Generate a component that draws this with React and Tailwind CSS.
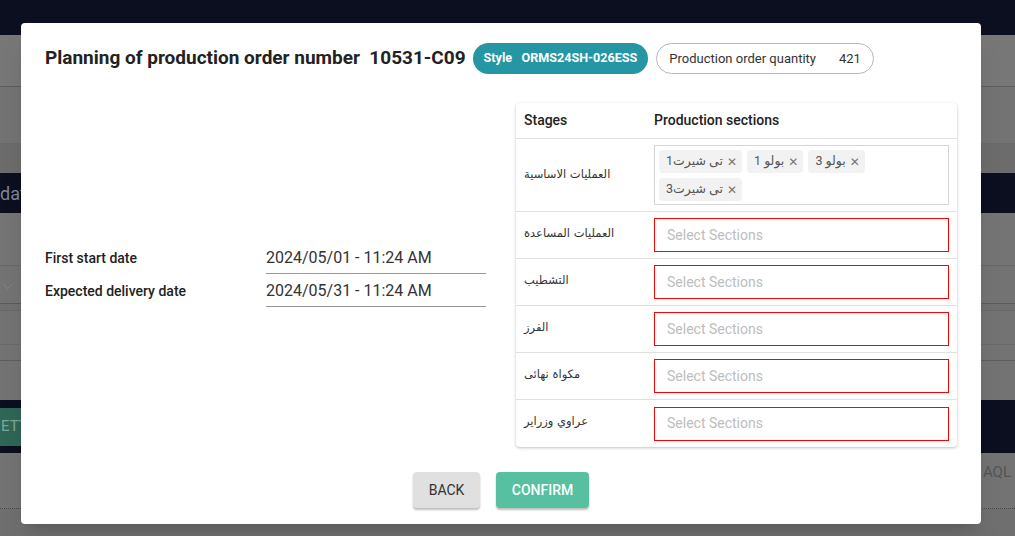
import React from "react";

const stages = [
  { name: "العمليات الاساسية", chips: ["تی شیرت1", "بولو 1", "بولو 3", "تی شیرت3"] },
  { name: "العمليات المساعدة" },
  { name: "التشطيب" },
  { name: "الفرز" },
  { name: "مكواة نهائى" },
  { name: "عراوي وزراير" },
];

const Chip = ({ label }) => (
  <div className="flex h-[23px] items-center gap-[4px] rounded-sm bg-[#f2f2f2] pl-[7px] pr-[5px] text-[12.5px] text-[#555]">
    <span>{label}</span>
    <span className="text-[12px] leading-none text-[#777]">✕</span>
  </div>
);

const Background = () => (
  <div className="flex h-[536px] w-full flex-col bg-[#757575]">
    <div className="h-[35px] bg-[#0b0f1f]" />
    <div className="h-[52px] border-b border-[#5e5e5e] bg-[#777777]" />
    <div className="h-[56px] bg-[#737373]" />
    <div className="h-[30px] bg-[#6c6c6c]" />
    <div className="flex h-[40px] items-center bg-[#0b0f1f] text-[18px] text-[#7d8596]">dat</div>
    <div className="h-[53px] border-b border-[#686868] bg-[#747474]" />
    <div className="flex h-[38px] items-center border-b border-[#5a5a5a] bg-[#737373] pl-[3px] text-[12px] text-[#8a8a8a]">⌵</div>
    <div className="h-[7px] border-b border-[#686868] bg-[#707070]" />
    <div className="h-[34px] border-b border-[#6a6a6a] bg-[#737373]" />
    <div className="h-[16px] border-b border-[#5e5e5e] bg-[#737373]" />
    <div className="h-[39px] bg-[#737373]" />
    <div className="flex h-[53px] items-center bg-[#0b0f1f]">
      <div className="flex h-[38px] w-[40px] items-center bg-[#2f6656] pl-[1px] text-[15px] text-[#7aa89a]">ETT</div>
    </div>
    <div className="flex h-[56px] items-start justify-end border-b border-dotted border-[#4a4a4a] bg-[#737373] pr-[4px] pt-[8px] text-[15px] text-[#555]">
      s AQL
    </div>
    <div className="flex-1 bg-[#6f6f6f]" />
  </div>
);

export default function App() {
  return (
    <div className="relative h-[536px] w-[1015px] overflow-hidden" style={{ fontFamily: "Roboto, 'DejaVu Sans', sans-serif" }}>
      <Background />
      <div className="absolute left-[21px] top-[23px] flex h-[501px] w-[960px] flex-col rounded-[4px] bg-white px-[24px] pt-[20px] shadow-xl">
        {/* title */}
        <div className="flex h-[31px] items-center">
          <h1 className="text-[19px] font-bold text-[#222]">
            Planning of production order number&nbsp; 10531-C09
          </h1>
          <div className="ml-[7px] flex h-[31px] items-center rounded-full bg-[#2596a3] px-[11px] text-[12.6px] font-bold text-white">
            Style&nbsp;&nbsp; ORMS24SH-026ESS
          </div>
          <div className="ml-[8px] flex h-[31px] items-center rounded-full border border-[#b8b8b8] px-[12px] text-[13px] text-[#333]">
            Production order quantity
            <span className="ml-[23px]">421</span>
          </div>
        </div>

        {/* body */}
        <div className="mt-[29px] flex">
          <div className="flex w-[441px] flex-col justify-center pt-[3px]">
            <div className="flex">
              <div className="w-[221px] pb-[3px] text-[14px] font-medium leading-[24px] text-[#222]">First start date</div>
              <div className="w-[220px] border-b border-[#999] pb-[3px] text-[16px] leading-[24px] text-[#333]">2024/05/01 - 11:24 AM</div>
            </div>
            <div className="flex">
              <div className="w-[221px] pb-[3px] pt-[5px] text-[14px] font-medium leading-[24px] text-[#222]">Expected delivery date</div>
              <div className="w-[220px] border-b border-[#999] pb-[3px] pt-[5px] text-[16px] leading-[24px] text-[#333]">2024/05/31 - 11:24 AM</div>
            </div>
          </div>

          <div className="ml-[30px] w-[441px] rounded-[4px] bg-white shadow-[0_1px_3px_rgba(0,0,0,0.25)]">
            <div className="flex h-[36px] items-center border-b border-[#e0e0e0] text-[14px] font-medium text-[#222]">
              <div className="w-[130px] pl-[8px]">Stages</div>
              <div className="pl-[8px]">Production sections</div>
            </div>
            {stages.map((s, i) => (
              <div
                key={i}
                className={`flex items-center ${i < stages.length - 1 ? "border-b border-[#e0e0e0]" : ""} ${s.chips ? "h-[73px]" : "h-[47px]"}`}
              >
                <div
                  className={`w-[130px] pl-[8px] text-[11.5px] text-[#333] ${s.chips ? "" : "-mt-[3px]"}`}
                  style={{ fontFamily: "'DejaVu Sans', sans-serif" }}
                >
                  {s.name}
                </div>
                <div className="flex-1 pl-[8px] pr-[8px]">
                  {s.chips ? (
                    <div className="flex h-[60px] flex-wrap content-start gap-x-[5px] gap-y-[5px] border border-[#d6d6d6] p-[4px]">
                      {s.chips.map((c) => (
                        <Chip key={c} label={c} />
                      ))}
                    </div>
                  ) : (
                    <div className="flex h-[34px] items-center border border-[#ff0000] px-[12px] text-[14px] text-[#bdbdbd]">
                      Select Sections
                    </div>
                  )}
                </div>
              </div>
            ))}
          </div>
        </div>

        {/* actions */}
        <div className="mt-[25px] flex justify-center gap-[16px]">
          <button className="h-[36px] w-[67px] rounded-[4px] bg-[#e0e0e0] text-[14px] text-[#333] shadow-[0_2px_2px_rgba(0,0,0,0.25)]">
            BACK
          </button>
          <button className="h-[36px] w-[93px] rounded-[4px] bg-[#56c0a1] text-[14px] font-medium text-white shadow-[0_2px_2px_rgba(0,0,0,0.25)]">
            CONFIRM
          </button>
        </div>
      </div>
    </div>
  );
}
